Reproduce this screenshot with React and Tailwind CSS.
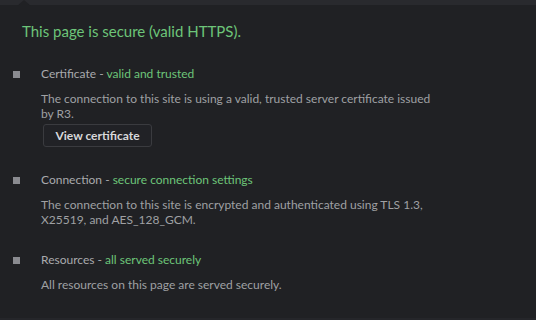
import React from "react";

const sections = [
  {
    label: "Certificate",
    status: "valid and trusted",
    text: "The connection to this site is using a valid, trusted server certificate issued by R3.",
    button: "View certificate",
  },
  {
    label: "Connection",
    status: "secure connection settings",
    text: "The connection to this site is encrypted and authenticated using TLS 1.3, X25519, and AES_128_GCM.",
  },
  {
    label: "Resources",
    status: "all served securely",
    text: "All resources on this page are served securely.",
  },
];

function Section({ label, status, text, button }) {
  return (
    <div className="flex mt-[25px]">
      <div className="w-[41px] shrink-0 pl-[13px] pt-[5px]">
        <div className="w-[7px] h-[7px] bg-[#8a8b90]" />
      </div>
      <div className="flex-1">
        <div className="text-[12px] leading-[16px] text-[#a9aaad]">
          {label} - <span className="text-[#6dc579]">{status}</span>
        </div>
        <p className="mt-[9px] w-[395px] text-[12px] leading-[15px] text-[#9fa0a3]">
          {text}
        </p>
        {button && (
          <button className="mt-[3px] ml-[2px] h-[23px] w-[109px] rounded-[3px] border border-[#3a3b3f] bg-[#212226] text-[12px] font-bold text-[#d8d9db]">
            {button}
          </button>
        )}
      </div>
    </div>
  );
}

export default function App() {
  return (
    <div
      className="relative w-[536px] h-[320px] bg-[#202124] overflow-hidden"
      style={{ fontFamily: 'Lato, "Open Sans", sans-serif' }}
    >
      <div className="h-[5px] bg-[#292a2e]" />
      <svg className="absolute left-[17px] top-0" width="14" height="6" viewBox="0 0 14 6">
        <polygon points="0,6 7,0 14,6" fill="#202124" />
      </svg>
      <div className="pl-[22px] pt-[16px] text-[15px] leading-[20px] text-[#6dc579]">
        This page is secure (valid HTTPS).
      </div>
      <div className="flex flex-col">
        {sections.map((s) => (
          <Section key={s.label} {...s} />
        ))}
      </div>
      <div className="absolute bottom-0 left-0 right-0 h-[2px] bg-[#25262a]" />
    </div>
  );
}
